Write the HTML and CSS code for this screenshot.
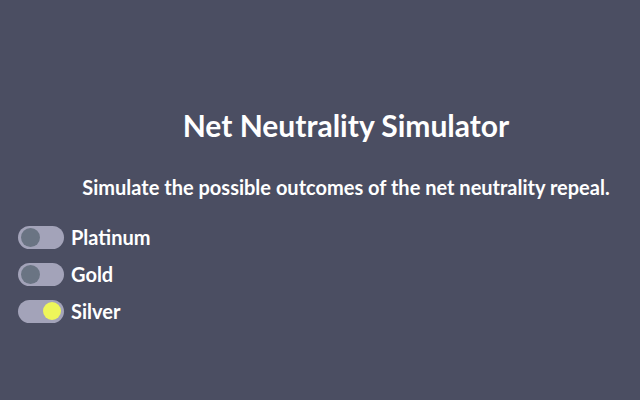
FILE: index.html
```html
<!DOCTYPE html>
<html>
<head>
<meta charset="utf-8">
<link rel="stylesheet" href="styles.css">
</head>
<body>
<div class="page">
  <h1 class="title">Net Neutrality Simulator</h1>
  <p class="subtitle">Simulate the possible outcomes of the net neutrality repeal.</p>
  <ul class="options">
    <li class="option"><span class="toggle"><span class="knob"></span></span><span class="label">Platinum</span></li>
    <li class="option"><span class="toggle"><span class="knob"></span></span><span class="label">Gold</span></li>
    <li class="option"><span class="toggle on"><span class="knob"></span></span><span class="label">Silver</span></li>
  </ul>
</div>
</body>
</html>
```
FILE: styles.css
```css
html, body {
  margin: 0;
  padding: 0;
  background: #4b4e62;
  height: 100%;
}
body {
  font-family: Lato, "Liberation Sans", sans-serif;
  color: #ffffff;
  font-weight: 700;
}
.page {
  padding: 105px 0 0 0;
}
.title {
  margin: 0 0 0 52px;
  text-align: center;
  font-size: 30px;
  line-height: 40px;
  font-weight: 700;
}
.subtitle {
  margin: 30px 0 0 52px;
  text-align: center;
  font-size: 20px;
  line-height: 24px;
}
.options {
  list-style: none;
  margin: 26px 0 0 18px;
  padding: 0;
  display: flex;
  flex-direction: column;
  gap: 13px;
}
.option {
  display: flex;
  align-items: center;
  gap: 7px;
  height: 24px;
}
.toggle {
  width: 46px;
  height: 23px;
  border-radius: 12px;
  background: #a3a3b9;
  display: flex;
  align-items: center;
  padding: 0 3px;
  box-sizing: border-box;
}
.knob {
  width: 19px;
  height: 19px;
  border-radius: 50%;
  background: #6a7483;
}
.toggle.on {
  justify-content: flex-end;
}
.toggle.on .knob {
  width: 18px;
  height: 18px;
  background: #eef65a;
}
.label {
  font-size: 20px;
  line-height: 24px;
}
```
